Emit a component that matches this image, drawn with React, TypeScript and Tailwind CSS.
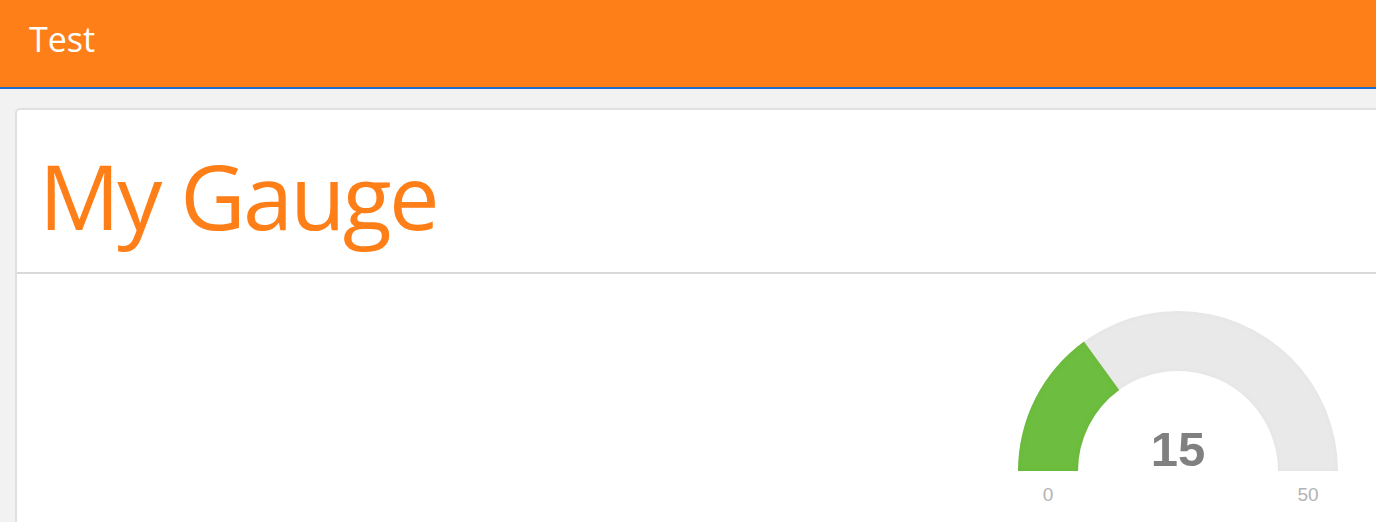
import React from 'react';

const Gauge: React.FC<{ value: number; min: number; max: number }> = ({ value, min, max }) => {
  const cx = 180;
  const cy = 197;
  const ro = 160;
  const ri = 100;
  const a = (Math.PI * (value - min)) / (max - min);
  const ox = cx - ro * Math.cos(a);
  const oy = cy - ro * Math.sin(a);
  const ix = cx - ri * Math.cos(a);
  const iy = cy - ri * Math.sin(a);

  return (
    <svg width={360} height={247} viewBox="0 0 360 247" className="block">
      <defs>
        <filter id="inset" x="-10%" y="-10%" width="120%" height="120%">
          <feGaussianBlur in="SourceAlpha" stdDeviation="3" result="blur" />
          <feComposite in="blur" in2="SourceAlpha" operator="arithmetic" k2="-1" k3="1" result="shadow" />
          <feFlood floodColor="#000" floodOpacity="0.06" />
          <feComposite in2="shadow" operator="in" result="s" />
          <feMerge>
            <feMergeNode in="SourceGraphic" />
            <feMergeNode in="s" />
          </feMerge>
        </filter>
      </defs>
      <path
        d={`M ${cx - ro} ${cy} A ${ro} ${ro} 0 0 1 ${cx + ro} ${cy} L ${cx + ri} ${cy} A ${ri} ${ri} 0 0 0 ${cx - ri} ${cy} Z`}
        fill="#eae9ea"
        filter="url(#inset)"
      />
      <path
        d={`M ${cx - ro} ${cy} A ${ro} ${ro} 0 0 1 ${ox} ${oy} L ${ix} ${iy} A ${ri} ${ri} 0 0 0 ${cx - ri} ${cy} Z`}
        fill="#6dbd40"
        filter="url(#inset)"
      />
      <text x={cx} y={192} textAnchor="middle" fontFamily="'Liberation Sans', Arial, sans-serif" fontWeight="bold" fontSize="49" fill="#808080">
        {value}
      </text>
      <text x={cx - 130} y={227} textAnchor="middle" fontFamily="'Liberation Sans', Arial, sans-serif" fontSize="19" fill="#b3b3b3">
        {min}
      </text>
      <text x={cx + 130} y={227} textAnchor="middle" fontFamily="'Liberation Sans', Arial, sans-serif" fontSize="19" fill="#b3b3b3">
        {max}
      </text>
    </svg>
  );
};

export default function App() {
  return (
    <div className="h-[522px] bg-[#f2f2f2] overflow-hidden font-['Open_Sans',sans-serif]">
      <header className="h-[89px] bg-[#fe7f18] border-b-2 border-[#1b6ccc] flex items-center px-[29px]">
        <span className="text-white text-[34px] leading-none -mt-[10px]">Test</span>
      </header>

      <div className="pt-[19px] pl-[15px]">
        <div className="w-[1400px] bg-white border-2 border-[#e0e0e0] rounded-[5px]">
          <div className="h-[164px] border-b-2 border-[#d9d9d9] pl-[22px] flex items-center">
            <h1 className="text-[#fe7f18] text-[90px] leading-none tracking-[-0.03em] mt-[8px]">My Gauge</h1>
          </div>
          <div className="pl-[981px] pb-[40px]">
            <Gauge value={15} min={0} max={50} />
          </div>
        </div>
      </div>
    </div>
  );
}
